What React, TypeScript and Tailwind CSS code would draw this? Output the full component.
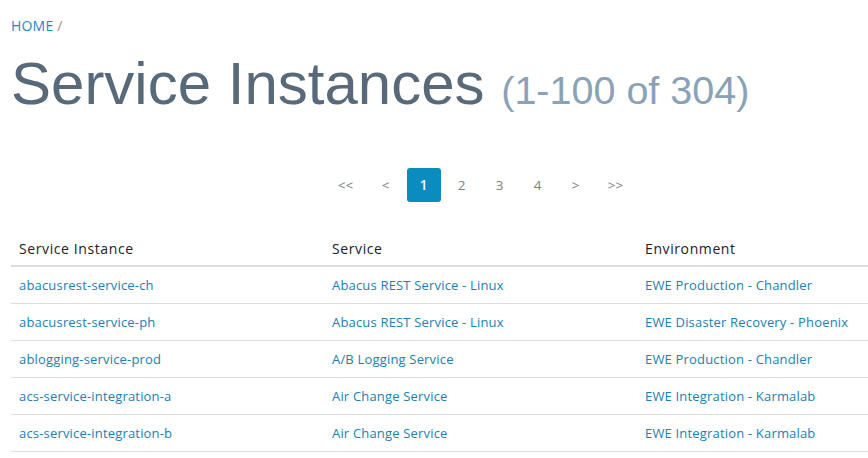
const rows = [
  ["abacusrest-service-ch", "Abacus REST Service - Linux", "EWE Production - Chandler"],
  ["abacusrest-service-ph", "Abacus REST Service - Linux", "EWE Disaster Recovery - Phoenix"],
  ["ablogging-service-prod", "A/B Logging Service", "EWE Production - Chandler"],
  ["acs-service-integration-a", "Air Change Service", "EWE Integration - Karmalab"],
  ["acs-service-integration-b", "Air Change Service", "EWE Integration - Karmalab"],
]

const pages = [
  {label: "<<", wide: true},
  {label: "<"},
  {label: "1", active: true},
  {label: "2"},
  {label: "3"},
  {label: "4"},
  {label: ">"},
  {label: ">>", wide: true},
]

export default function App() {
  return (
    <div className="w-[868px] h-[458px] overflow-hidden bg-white font-['Open_Sans',sans-serif]">
      <div className="w-[939px] ml-[11px]">
        <div className="pt-[16px] text-[14px] leading-[20px] tracking-[0.2px]">
          <a className="text-[#1a8ac6]">HOME</a>
          <span className="text-[#a58f7a]"> /</span>
        </div>
        <h1 className="mt-[15px] font-['Liberation_Sans',Arial,sans-serif] text-[60px] leading-[66px] text-[#586979] whitespace-nowrap">
          Service Instances{" "}
          <small className="text-[39.5px] text-[#89a2b7]">(1-100 of 304)</small>
        </h1>
        <div className="mt-[45px] flex justify-center items-center gap-[4px]">
          {pages.map((p) => (
            <span
              key={p.label}
              className={
                "h-[34px] flex items-center justify-center text-[13.5px] rounded-[3px] " +
                (p.wide ? "w-[38px] " : "w-[34px] ") +
                (p.active ? "bg-[#0a8cbf] text-white font-semibold" : "text-[#808080]")
              }
            >
              {p.label}
            </span>
          ))}
        </div>
        <table className="mt-[27px] w-[939px] table-fixed border-collapse text-[13px]">
          <thead>
            <tr className="border-b-2 border-[#ddd]">
              <th className="text-left font-normal text-[14px] tracking-[0.6px] text-[#222] px-[8px] pt-[10px] pb-[6px] leading-[20px]">Service Instance</th>
              <th className="text-left font-normal text-[14px] tracking-[0.6px] text-[#222] px-[8px] pt-[10px] pb-[6px] leading-[20px]">Service</th>
              <th className="text-left font-normal text-[14px] tracking-[0.6px] text-[#222] px-[8px] pt-[10px] pb-[6px] leading-[20px]">Environment</th>
            </tr>
          </thead>
          <tbody>
            {rows.map((r) => (
              <tr key={r[0]} className="border-b border-[#ddd]">
                {r.map((c, i) => (
                  <td key={i} className="px-[8px] py-[8px] leading-[20px] tracking-[0.18px] text-[#1a80b6] whitespace-nowrap">
                    <a>{c}</a>
                  </td>
                ))}
              </tr>
            ))}
          </tbody>
        </table>
      </div>
    </div>
  )
}
